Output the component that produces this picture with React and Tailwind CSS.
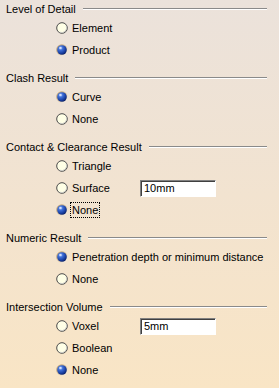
import React from 'react';

const sections = [
  {
    title: 'Level of Detail',
    options: [{ label: 'Element' }, { label: 'Product', checked: true }],
  },
  {
    title: 'Clash Result',
    options: [{ label: 'Curve', checked: true }, { label: 'None' }],
  },
  {
    title: 'Contact & Clearance Result',
    options: [
      { label: 'Triangle' },
      { label: 'Surface', value: '10mm' },
      { label: 'None', checked: true, focused: true },
    ],
  },
  {
    title: 'Numeric Result',
    options: [{ label: 'Penetration depth or minimum distance', checked: true }, { label: 'None' }],
  },
  {
    title: 'Intersection Volume',
    options: [{ label: 'Voxel', value: '5mm' }, { label: 'Boolean' }, { label: 'None', checked: true }],
  },
];

const Radio = ({ checked }) =>
  checked ? (
    <svg width="12" height="12" viewBox="0 0 12 12" className="shrink-0">
      <defs>
        <radialGradient id="ball" cx="0.35" cy="0.3" r="0.75">
          <stop offset="0" stopColor="#b8d0ff" />
          <stop offset="0.3" stopColor="#3f6fd8" />
          <stop offset="0.75" stopColor="#163b9c" />
          <stop offset="1" stopColor="#0a1c5c" />
        </radialGradient>
        <linearGradient id="rim" x1="0" y1="0" x2="1" y2="1">
          <stop offset="0" stopColor="#a88a5c" />
          <stop offset="0.5" stopColor="#d9c3a0" />
          <stop offset="1" stopColor="#ffffff" />
        </linearGradient>
      </defs>
      <circle cx="6" cy="6" r="5.8" fill="url(#rim)" />
      <circle cx="6" cy="6" r="4.8" fill="url(#ball)" />
      <ellipse cx="4.4" cy="3.9" rx="1.3" ry="0.9" fill="#e6eeff" opacity="0.8" />
    </svg>
  ) : (
    <svg width="12" height="12" viewBox="0 0 12 12" className="shrink-0">
      <circle cx="6" cy="6" r="5.3" fill="#ffffe6" stroke="#4a4a4a" strokeWidth="1" />
      <path d="M10.2 3.6 A5 5 0 0 1 3.6 10.2" fill="none" stroke="#c8c8c8" strokeWidth="0.8" />
    </svg>
  );

const Section = ({ title, options }) => (
  <div>
    <div className="flex h-[16px] items-center pl-[6px] pr-[12px]">
      <span className="whitespace-nowrap">{title}</span>
      <div className="ml-[7px] mt-[-1px] flex-1">
        <div className="h-px bg-[#8a8a8a]" />
        <div className="h-px bg-white" />
      </div>
    </div>
    {options.map((o, i) => (
      <div key={i} className="flex h-[22px] items-center pl-[56px]">
        <Radio checked={o.checked} />
        <span className={o.value ? 'ml-[4px] w-[68px]' : 'ml-[4px]'}>
          {o.focused ? (
            <span className="ml-[-2px] border border-dotted border-black px-[1px] py-[1px]">{o.label}</span>
          ) : (
            o.label
          )}
        </span>
        {o.value && (
          <div className="flex h-[17px] w-[76px] items-center border-t border-l border-t-[#808080] border-l-[#808080] border-b border-r border-b-white border-r-white bg-white pl-[3px] shadow-[inset_1px_1px_0_#404040]">
            {o.value}
          </div>
        )}
      </div>
    ))}
  </div>
);

export default function App() {
  return (
    <div
      className="flex h-[388px] w-[279px] flex-col gap-[9px] overflow-hidden bg-gradient-to-b from-[#ebe2db] via-[#f2e3d0] to-[#f9e5c5] pt-[1px] text-[11px] leading-none text-black"
      style={{ fontFamily: '"Liberation Sans", Arial, sans-serif' }}
    >
      {sections.map((s) => (
        <Section key={s.title} {...s} />
      ))}
    </div>
  );
}
